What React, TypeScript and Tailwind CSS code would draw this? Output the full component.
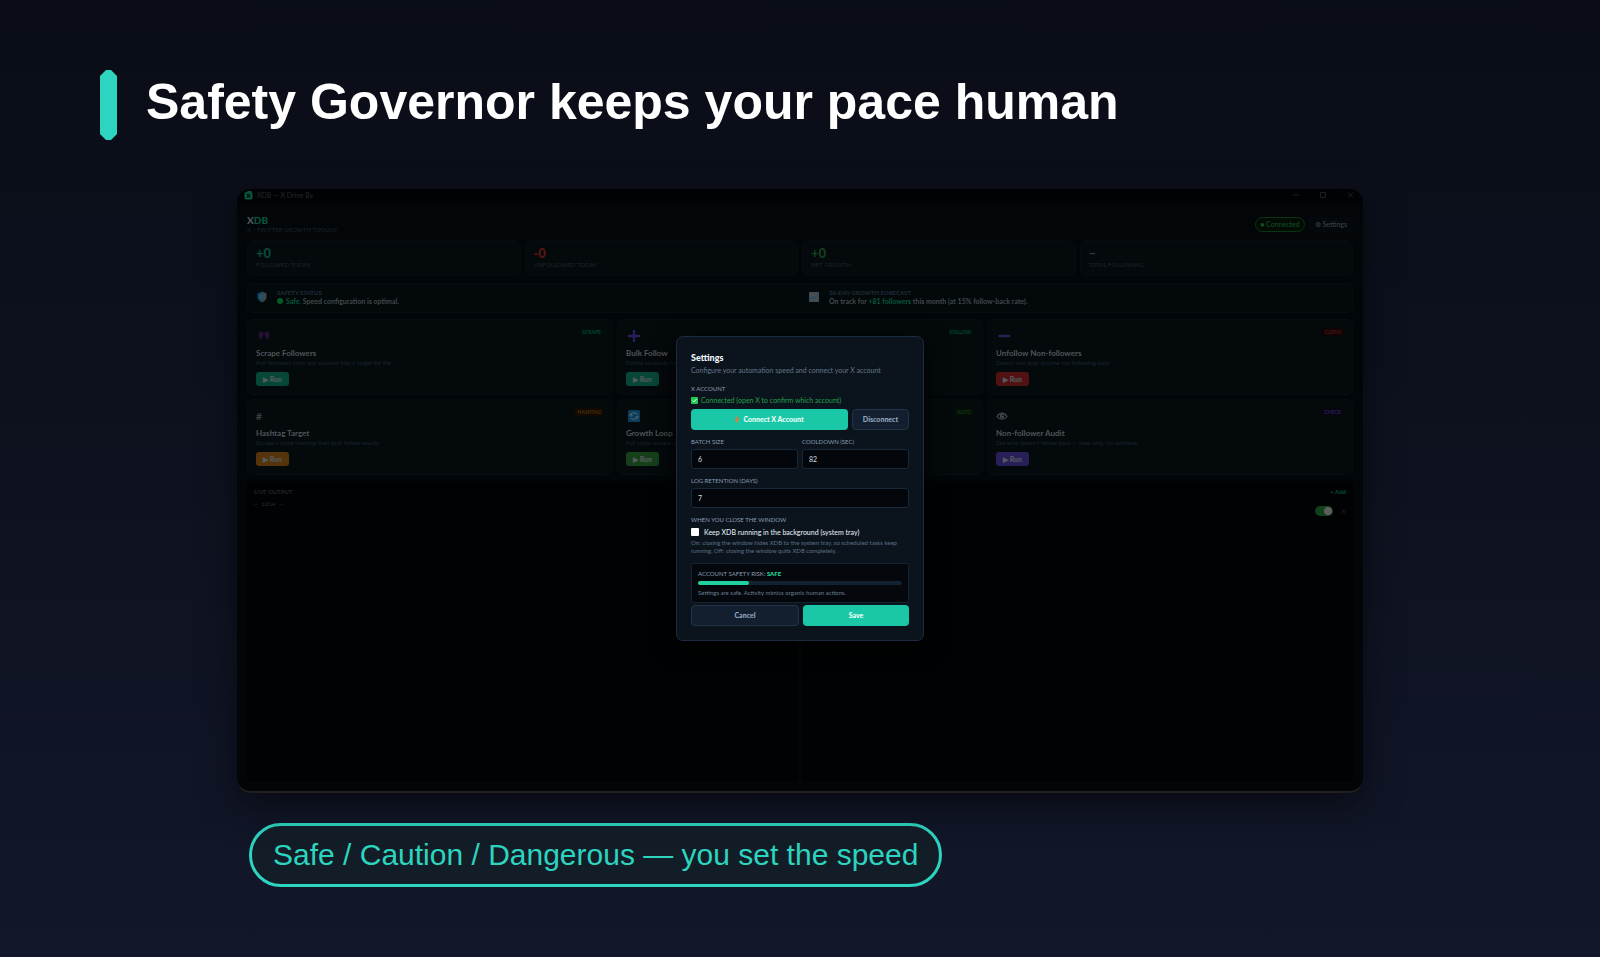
import type { ReactNode } from "react";
import clsx from "clsx";

type Stat = { value: string; label: string; color: string };

const STATS: Stat[] = [
  { value: "+0", label: "FOLLOWED TODAY", color: "text-[#064a3a]" },
  { value: "-0", label: "UNFOLLOWED TODAY", color: "text-[#5c1414]" },
  { value: "+0", label: "NET GROWTH", color: "text-[#12401a]" },
  { value: "–", label: "TOTAL FOLLOWING", color: "text-[#30363d]" },
];

type Tool = {
  icon: ReactNode;
  title: string;
  description: string;
  badge: string;
  badgeClass: string;
  buttonClass: string;
};

const TOOLS: Tool[] = [
  {
    icon: <PeopleIcon />,
    title: "Scrape Followers",
    description: "Pull followers from any account into a target list file",
    badge: "SCRAPE",
    badgeClass: "bg-[#020c0b] text-[#064035]",
    buttonClass: "bg-[#074738]",
  },
  {
    icon: <PlusIcon />,
    title: "Bulk Follow",
    description: "Follow accounts from your list",
    badge: "FOLLOW",
    badgeClass: "bg-[#020c0b] text-[#064035]",
    buttonClass: "bg-[#074738]",
  },
  {
    icon: <MinusIcon />,
    title: "Unfollow Non-followers",
    description: "Detect and drop anyone not following back",
    badge: "CLEAN",
    badgeClass: "bg-[#100405] text-[#4c1212]",
    buttonClass: "bg-[#521214]",
  },
  {
    icon: <span className="text-[10px] leading-3 font-bold text-[#3c4043]">#</span>,
    title: "Hashtag Target",
    description: "Scrape a niche hashtag then bulk follow results",
    badge: "HASHTAG",
    badgeClass: "bg-[#100a03] text-[#4a2c08]",
    buttonClass: "bg-[#55330b]",
  },
  {
    icon: <LoopIcon />,
    title: "Growth Loop",
    description: "Full cycle: scrape → follow",
    badge: "AUTO",
    badgeClass: "bg-[#040d06] text-[#113818]",
    buttonClass: "bg-[#15401a]",
  },
  {
    icon: <EyeIcon />,
    title: "Non-follower Audit",
    description: "See who doesn't follow back — view only, no unfollow",
    badge: "CHECK",
    badgeClass: "bg-[#070610] text-[#281e54]",
    buttonClass: "bg-[#281e58]",
  },
];

function LogoIcon() {
  return (
    <svg className="size-[9px]" viewBox="0 0 18 18" aria-hidden="true">
      <rect x="1" y="2" width="16" height="15" rx="4" fill="#07573f" />
      <path d="M5 2 8 0h6l3 3" fill="#07573f" />
      <path d="m6 6 6 7M12 6l-6 7" stroke="#020a08" strokeWidth="2.4" />
    </svg>
  );
}

function PeopleIcon() {
  return (
    <svg className="h-3 w-4" viewBox="0 0 32 24" fill="#251035" aria-hidden="true">
      <path d="M5 7q0-4 5-4t5 4-2 8l-3 5-3-5Q5 11 5 7Z" />
      <path d="M17 7q0-4 5-4t5 4-2 8l-3 5-3-5q-2-4-2-8Z" />
    </svg>
  );
}

function PlusIcon() {
  return (
    <svg className="h-3 w-4" viewBox="0 0 32 24" aria-hidden="true">
      <path d="M16 2v20M6 12h20" stroke="#2a1e58" strokeWidth="5" strokeLinecap="round" />
    </svg>
  );
}

function MinusIcon() {
  return (
    <svg className="h-3 w-4" viewBox="0 0 32 24" aria-hidden="true">
      <path d="M7 12h19" stroke="#28215a" strokeWidth="5" strokeLinecap="round" />
    </svg>
  );
}

function LoopIcon() {
  return (
    <svg className="h-3 w-4" viewBox="0 0 32 24" fill="none" aria-hidden="true">
      <rect x="4" y="0" width="24" height="24" rx="3" fill="#0c3d59" />
      <path
        d="M10 13V9q0-3 3-3h6q3 0 3 3v1M22 12v3q0 3-3 3h-6q-3 0-3-2M7 11l3-3 3 3M19 13l3 3 3-3"
        stroke="#526773"
        strokeWidth="2"
      />
    </svg>
  );
}

function EyeIcon() {
  return (
    <svg className="h-3 w-3" viewBox="0 0 24 24" fill="none" aria-hidden="true">
      <path d="M2 13c5-9 15-9 20 0-5 7-15 7-20 0Z" stroke="#42474b" strokeWidth="2.4" />
      <circle cx="12" cy="12" r="4.5" fill="#42474b" />
      <circle cx="13" cy="11" r="1.5" fill="#05090d" />
    </svg>
  );
}

function ShieldIcon() {
  return (
    <svg className="h-3 w-[10px]" viewBox="0 0 20 24" aria-hidden="true">
      <path d="M10 1C7 3 4 4 1 4v8c0 6 5 9 9 11Z" fill="#15405a" />
      <path d="M10 1c3 2 6 3 9 3v8c0 6-5 9-9 11Z" fill="#3e464d" />
      <path d="M10 5v14c-4-2-6-4-6-7V7c2 0 4-1 6-2Z" fill="#1c5878" />
    </svg>
  );
}

function ChartIcon() {
  return (
    <svg className="size-[10px]" viewBox="1 1 22 22" fill="none" aria-hidden="true">
      <rect x="1" y="1" width="22" height="22" rx="2" fill="#454a50" />
      <path d="M6 1v22M12 1v22M18 1v22M1 8h22M1 16h22" stroke="#50565c" />
      <path d="m3 17 6-5 4 3 8-8" stroke="#1e5068" strokeWidth="3" />
    </svg>
  );
}

function CheckIcon() {
  return (
    <svg className="size-[7px] shrink-0" viewBox="0 0 14 14" fill="none" aria-hidden="true">
      <rect width="14" height="14" rx="2" fill="#1fcb55" />
      <path d="m3 7 3 3 5-6" stroke="#e8fff0" strokeWidth="2" />
    </svg>
  );
}

function PlugIcon() {
  return (
    <svg className="h-[7px] w-1" viewBox="0 0 8 14" aria-hidden="true">
      <path d="M2 0h1v4h2V0h1v4h1v5L5 11v3H3v-3L1 9V4h1z" fill="#d98245" />
      <path d="M1 5h6v3H1z" fill="#e2703a" />
    </svg>
  );
}

function TitleBar() {
  return (
    <div className="flex h-3 items-center justify-between bg-[#010203] px-[7px]">
      <div className="flex items-center gap-1 text-[7px] leading-2 text-[#24292d]">
        <LogoIcon />
        <span>XDB — X Drive By</span>
      </div>
      <svg className="h-2 w-16" viewBox="0 0 64 8" fill="none" stroke="#1d2124" aria-hidden="true">
        <path d="M1 4h6M28.5 1.500h5v5h-5zM56 1.500l5 5M61 1.500l-5 5" />
      </svg>
    </div>
  );
}

function AppHeader() {
  return (
    <header className="flex items-center justify-between">
      <div>
        <div className="text-[10px] leading-[10px] font-black text-[#50565a]">
          X<span className="text-[#075440]">DB</span>
        </div>
        <div className="text-[6px] leading-[9px] text-[#1b2329]">X / TWITTER GROWTH TOOLKIT</div>
      </div>
      <div className="flex items-center gap-1 text-[7px] leading-[13px]">
        <span className="rounded-full border border-[#0b3512] bg-[#020c04] px-1 text-[#145320]">
          ● Connected
        </span>
        <button
          type="button"
          className="rounded-sm border border-[#05090d] bg-[#04080c] px-[5px] text-[#3f464b]"
        >
          ⚙ Settings
        </button>
      </div>
    </header>
  );
}

function StatusItem({ icon, label, children }: { icon: ReactNode; label: string; children: ReactNode }) {
  return (
    <div className="flex items-center gap-[10px] px-[9px]">
      {icon}
      <div>
        <div className="text-[6px] leading-2 font-black text-[#1f2b36]">{label}</div>
        <div className="flex items-center gap-[3px] text-[7px] leading-[9px] font-bold text-[#42484c]">
          {children}
        </div>
      </div>
    </div>
  );
}

function ToolCard({ tool }: { tool: Tool }) {
  return (
    <article className="flex h-[76px] items-start justify-between rounded-md border border-[#070c10] bg-[#04090c] px-2 py-[7px]">
      <div>
        <div className="flex h-[18px] items-center">{tool.icon}</div>
        <h3 className="mt-[3px] text-[8px] leading-[10px] font-bold text-[#50565a]">{tool.title}</h3>
        <p className="text-[6px] leading-[10px] whitespace-nowrap text-[#1b2530]">{tool.description}</p>
        <button
          type="button"
          className={clsx(
            "mt-1 block rounded-[3px] px-[7px] text-[7px] leading-[14px] font-black text-[#555c5f]",
            tool.buttonClass,
          )}
        >
          ▶ Run
        </button>
      </div>
      <span className={clsx("mt-px rounded-sm px-[3px] text-[5px] leading-2 font-black", tool.badgeClass)}>
        {tool.badge}
      </span>
    </article>
  );
}

function NumberField({ id, label, value }: { id: string; label: string; value: string }) {
  return (
    <div className="min-w-0 flex-1">
      <label htmlFor={id} className="block text-[6px] leading-2 text-[#8a9db2]">
        {label}
      </label>
      <input
        id={id}
        defaultValue={value}
        className="mt-[3px] block h-5 w-full rounded-[3px] border border-[#182838] bg-[#03070c] px-[6px] text-[7px] text-[#d5dde5] outline-none"
      />
    </div>
  );
}

function SettingsDialog() {
  return (
    <div
      role="dialog"
      aria-labelledby="settings-title"
      className="w-[248px] rounded-[7px] border border-[#1a2d40] bg-[#0b141d] px-[14px] pt-[15px] pb-[14px] shadow-[0_8px_24px_#000]"
    >
      <h2 id="settings-title" className="text-[9px] leading-3 font-black text-[#f2f6fa]">
        Settings
      </h2>
      <p className="mt-px text-[7px] leading-[10px] whitespace-nowrap text-[#64768a]">
        Configure your automation speed and connect your X account
      </p>

      <div className="mt-[10px] text-[6px] leading-2 text-[#8a9db2]">X ACCOUNT</div>
      <div className="mt-[3px] flex items-center gap-[3px] text-[7px] leading-2 text-[#22a04c]">
        <CheckIcon />
        Connected (open X to confirm which account)
      </div>
      <div className="mt-[5px] flex gap-1">
        <button
          type="button"
          className="flex h-[21px] flex-1 items-center justify-center gap-1 rounded bg-[#1ac8a8] text-[7px] font-black text-[#f2fffb]"
        >
          <PlugIcon />
          Connect X Account
        </button>
        <button
          type="button"
          className="h-[21px] w-[57px] rounded border border-[#22344a] bg-[#131f2e] text-[7px] font-black text-[#93a8c0]"
        >
          Disconnect
        </button>
      </div>

      <div className="mt-2 flex gap-1">
        <NumberField id="batch-size" label="BATCH SIZE" value="6" />
        <NumberField id="cooldown" label="COOLDOWN (SEC)" value="82" />
      </div>
      <div className="mt-2 flex">
        <NumberField id="log-retention" label="LOG RETENTION (DAYS)" value="7" />
      </div>

      <div className="mt-2 text-[6px] leading-2 text-[#8a9db2]">WHEN YOU CLOSE THE WINDOW</div>
      <label className="mt-[3px] flex items-center gap-[5px] text-[7px] leading-[10px] font-medium text-[#e0e7ee]">
        <input type="checkbox" className="size-2 appearance-none rounded-[1px] bg-white" />
        Keep XDB running in the background (system tray)
      </label>
      <p className="mt-[2px] text-[6px] leading-2 text-[#5c7085]">
        On: closing the window hides XDB to the system tray, so scheduled tasks keep running. Off: closing the
        window quits XDB completely.
      </p>

      <div className="mt-2 rounded-[3px] border border-[#152230] bg-[#04080d] px-[6px] pt-[6px] pb-[5px]">
        <div className="text-[6px] leading-2 text-[#8a9db2]">
          ACCOUNT SAFETY RISK: <span className="font-black text-[#1fdc9c]">SAFE</span>
        </div>
        <div className="mt-[3px] h-1 rounded-full bg-[#142131]">
          <div className="h-1 w-1/4 rounded-full bg-[#1fd0a0]" />
        </div>
        <p className="mt-1 text-[6px] leading-2 text-[#6a7d92]">
          Settings are safe. Activity mimics organic human actions.
        </p>
      </div>

      <div className="mt-[2px] flex gap-1 text-[7px] font-black">
        <button
          type="button"
          className="h-[21px] flex-1 rounded border border-[#22344a] bg-[#131f2e] text-[#93a8c0]"
        >
          Cancel
        </button>
        <button type="button" className="h-[21px] flex-1 rounded bg-[#1ac8a8] text-[#f2fffb]">
          Save
        </button>
      </div>
    </div>
  );
}

function AppWindow() {
  return (
    <section className="relative overflow-hidden rounded-[14px] border-b-2 border-[#24201f] bg-[#020609] font-[Lato,'Open_Sans',sans-serif] shadow-[0_12px_36px_rgba(0,0,0,0.5)]">
      <TitleBar />
      <div className="px-[10px] pt-[14px] pb-[9px]">
        <AppHeader />

        <div className="mt-[6px] grid grid-cols-4 gap-1">
          {STATS.map((stat) => (
            <div
              key={stat.label}
              className="rounded-md border border-[#070c10] bg-[#04090c] px-2 pt-[5px] pb-[6px]"
            >
              <div className={clsx("text-[13px] leading-[15px] font-black", stat.color)}>{stat.value}</div>
              <div className="text-[6px] leading-2 text-[#1c262e]">{stat.label}</div>
            </div>
          ))}
        </div>

        <div className="mt-[7px] grid h-[30px] grid-cols-2 items-center rounded-md border border-[#070c10] bg-[#03080b] pb-[2px]">
          <StatusItem icon={<ShieldIcon />} label="SAFETY STATUS">
            <span className="size-[6px] rounded-full bg-[#075a24]" />
            <span>
              <span className="text-[#07583a]">Safe.</span> Speed configuration is optimal.
            </span>
          </StatusItem>
          <StatusItem icon={<ChartIcon />} label="30-DAY GROWTH FORECAST">
            <span>
              On track for <span className="text-[#07583f]">+81 followers</span> this month (at 15% follow-back
              rate).
            </span>
          </StatusItem>
        </div>

        <div className="mt-[6px] grid grid-cols-3 gap-1">
          {TOOLS.map((tool) => (
            <ToolCard key={tool.title} tool={tool} />
          ))}
        </div>

        <div className="mt-[6px] grid h-[301px] grid-cols-2 gap-1">
          <div className="rounded bg-[#010203] px-[7px] py-[7px]">
            <div className="text-[6px] leading-2 font-bold text-[#1e272e]">LIVE OUTPUT</div>
            <div className="mt-1 font-['Liberation_Mono',monospace] text-[6px] leading-[10px] text-[#262c32]">
              — idle —
            </div>
          </div>
          <div className="flex flex-col items-end rounded bg-[#010203] px-[7px] py-[7px]">
            <button type="button" className="text-[6px] leading-2 font-black text-[#064838]">
              + Add
            </button>
            <div className="mt-[10px] flex items-center gap-2">
              <input
                type="checkbox"
                role="switch"
                aria-label="Schedule enabled"
                defaultChecked
                className="flex h-[10px] w-[18px] appearance-none items-center justify-end rounded-full bg-[#12401a] p-px before:size-2 before:rounded-full before:bg-[#5e5e5e]"
              />
              <button
                type="button"
                aria-label="Remove schedule"
                className="text-[8px] leading-[10px] text-[#22272c]"
              >
                ×
              </button>
            </div>
          </div>
        </div>
      </div>

      {/* Dialog floats centered over the dimmed dashboard */}
      <div className="absolute inset-x-0 top-0 bottom-[3px] flex items-center justify-center">
        <SettingsDialog />
      </div>
    </section>
  );
}

export default function App() {
  return (
    <main className="min-h-screen bg-linear-to-b from-[#0a0d16] to-[#12172a] px-[100px] py-[70px] font-['Liberation_Sans',Arial,sans-serif]">
      <div className="flex h-[70px] items-start gap-[29px]">
        <svg className="h-[70px] w-[17px]" viewBox="0 0 17 70" fill="#2dd4bf" aria-hidden="true">
          <path d="M6 0h5l6 6v58l-6 6H6l-6-6V6z" />
        </svg>
        <h1 className="text-[50px] leading-[64px] font-bold whitespace-nowrap text-white">
          Safety Governor keeps your pace human
        </h1>
      </div>

      <div className="mx-auto mt-[49px] w-full max-w-[1126px]">
        <AppWindow />
        <div className="mt-[30px] ml-3 inline-block rounded-full border-3 border-[#2dd4bf] bg-[#131d28] px-[21px] text-[30px] leading-[58px] text-[#2dd4bf]">
          Safe / Caution / Dangerous — you set the speed
        </div>
      </div>
    </main>
  );
}
